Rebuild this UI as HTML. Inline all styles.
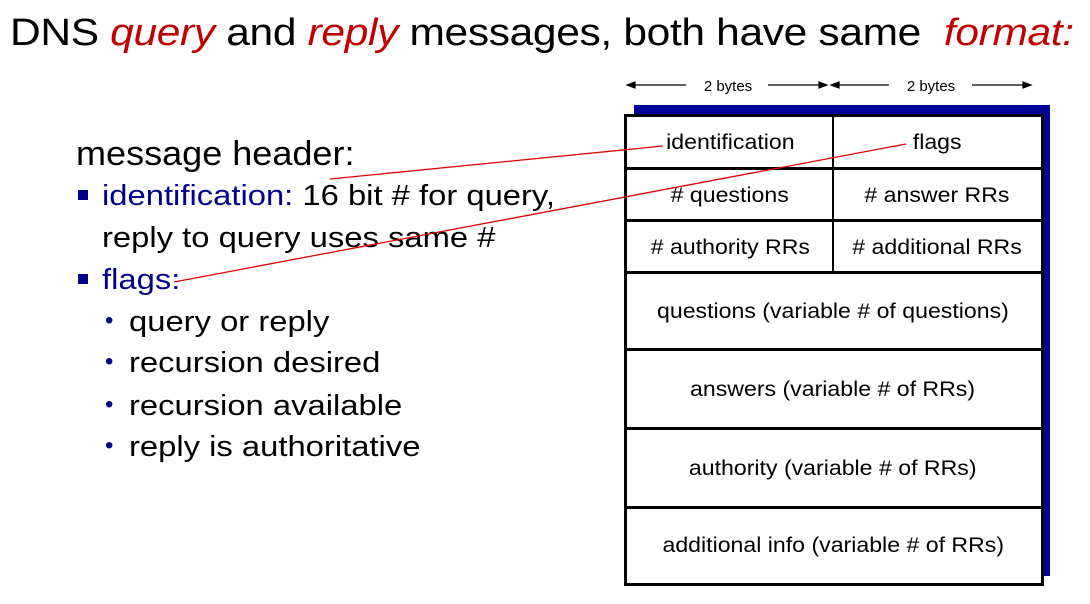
<!DOCTYPE html>
<html><head><style>
body{margin:0;width:1090px;height:604px;background:#fff;position:relative;overflow:hidden;font-family:"Liberation Sans",sans-serif}
.a{position:absolute;white-space:nowrap}
.s{transform-origin:0 0;transform:scaleX(1.13)}
.r{color:#c00000;font-style:italic}
.b{color:#00008b}
.cell{position:absolute;display:flex;align-items:center;justify-content:center;font-size:21px;color:#000}
.cell span{display:inline-block;transform:scaleX(1.1)}
</style></head><body>
<div class="a" style="left:10px;top:12px;font-size:38px;letter-spacing:-0.3px;transform-origin:0 0;transform:scaleX(1.118)">DNS <span class="r">query</span> and <span class="r">reply</span> messages, both have same&nbsp; <span class="r">format:</span></div>

<div class="a" style="left:76px;top:135px;font-size:34px;transform-origin:0 0;transform:scaleX(1.06)">message header:</div>
<div class="a" style="left:78px;top:190px;width:10px;height:10px;background:#00008b"></div>
<div class="a s" style="left:102px;top:180px;font-size:29px"><span class="b">identification:</span> 16 bit # for query,</div>
<div class="a s" style="left:102px;top:222px;font-size:29px">reply to query uses same #</div>
<div class="a" style="left:78px;top:274px;width:10px;height:10px;background:#00008b"></div>
<div class="a b s" style="left:102px;top:264px;font-size:29px">flags:</div>
<div class="a b" style="left:105px;top:307px;font-size:24px">•</div>
<div class="a b" style="left:105px;top:348px;font-size:24px">•</div>
<div class="a b" style="left:105px;top:391px;font-size:24px">•</div>
<div class="a b" style="left:105px;top:432px;font-size:24px">•</div>
<div class="a s" style="left:129px;top:306px;font-size:29px">query or reply</div>
<div class="a s" style="left:129px;top:347px;font-size:29px">recursion desired</div>
<div class="a s" style="left:129px;top:390px;font-size:29px">recursion available</div>
<div class="a s" style="left:129px;top:431px;font-size:29px">reply is authoritative</div>

<div class="a" style="left:634px;top:105px;width:416px;height:471px;background:#000099"></div>
<div class="a" style="left:624px;top:114px;width:414px;height:466px;background:#fff;border:3px solid #000"></div>
<div class="a" style="left:624px;top:167px;width:420px;height:3px;background:#000"></div>
<div class="a" style="left:624px;top:219px;width:420px;height:3px;background:#000"></div>
<div class="a" style="left:624px;top:271px;width:420px;height:3px;background:#000"></div>
<div class="a" style="left:624px;top:348px;width:420px;height:3px;background:#000"></div>
<div class="a" style="left:624px;top:427px;width:420px;height:3px;background:#000"></div>
<div class="a" style="left:624px;top:506px;width:420px;height:3px;background:#000"></div>
<div class="a" style="left:832px;top:115px;width:2px;height:158px;background:#000"></div>

<div class="cell" style="left:627px;top:117px;width:206px;height:52px"><span>identification</span></div>
<div class="cell" style="left:834px;top:117px;width:206px;height:52px"><span>flags</span></div>
<div class="cell" style="left:627px;top:170px;width:206px;height:52px"><span># questions</span></div>
<div class="cell" style="left:834px;top:170px;width:206px;height:52px"><span># answer RRs</span></div>
<div class="cell" style="left:627px;top:222px;width:206px;height:52px"><span># authority RRs</span></div>
<div class="cell" style="left:834px;top:222px;width:206px;height:52px"><span># additional RRs</span></div>
<div class="cell" style="left:627px;top:274px;width:412px;height:76px"><span>questions (variable # of questions)</span></div>
<div class="cell" style="left:627px;top:351px;width:412px;height:78px"><span>answers (variable # of RRs)</span></div>
<div class="cell" style="left:627px;top:430px;width:412px;height:78px"><span>authority (variable # of RRs)</span></div>
<div class="cell" style="left:627px;top:509px;width:412px;height:74px"><span>additional info (variable # of RRs)</span></div>

<svg class="a" style="left:0;top:0" width="1090" height="604">
<g stroke="#000" stroke-width="1.2" fill="#000">
<line x1="630" y1="85" x2="686" y2="85"/><polygon points="627,85 635,82 635,88"/>
<line x1="768" y1="85" x2="824" y2="85"/><polygon points="827,85 819,82 819,88"/>
<line x1="834" y1="85" x2="889" y2="85"/><polygon points="831,85 839,82 839,88"/>
<line x1="972" y1="85" x2="1028" y2="85"/><polygon points="1031,85 1023,82 1023,88"/>
</g>
<text x="728" y="91" font-family="Liberation Sans" font-size="15" text-anchor="middle">2 bytes</text>
<text x="931" y="91" font-family="Liberation Sans" font-size="15" text-anchor="middle">2 bytes</text>
<line x1="330" y1="179" x2="663" y2="146" stroke="#e00000" stroke-width="1.3"/>
<line x1="174" y1="282" x2="906" y2="144" stroke="#e00000" stroke-width="1.3"/>
</svg>
</body></html>
